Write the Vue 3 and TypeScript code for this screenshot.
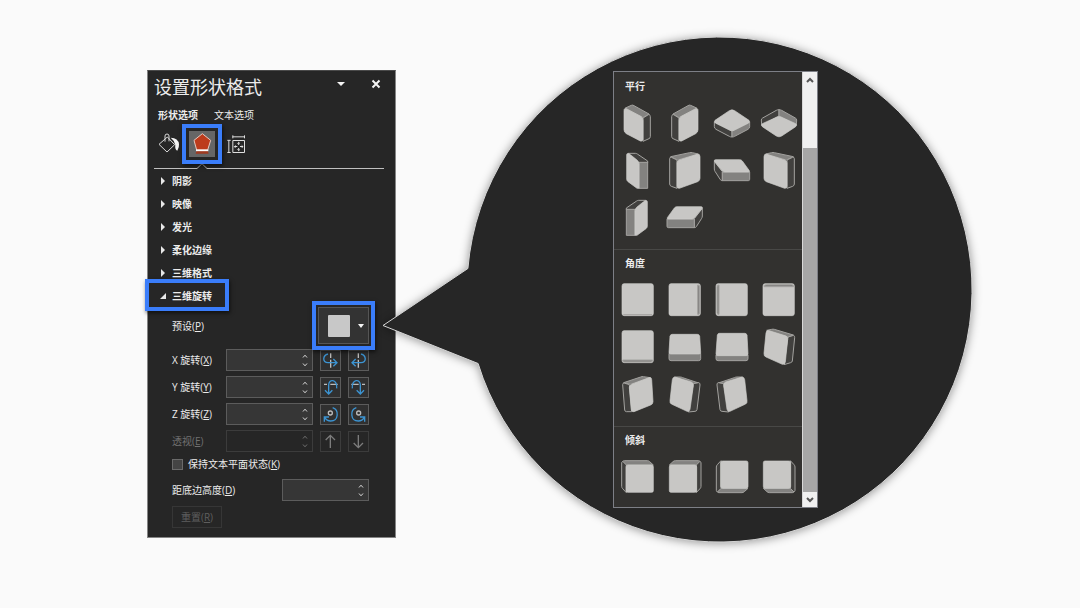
<script setup lang="ts">
import { ref } from 'vue'

type Tone = 'face' | 'mid' | 'dark'
interface Part { tone: Tone; d: string }
interface Preset { name: string; parts: Part[]; flip?: string }
interface Group { title: string; presets: Preset[] }

const part = (tone: Tone, d: string): Part => ({ tone, d })

const isoLeft: Part[] = [
  part('mid', 'M34 24L52 16Q56 14 60 17L105 42L87 53Z'),
  part('dark', 'M87 54L105 43Q109 45 109 50V110Q109 114 105 116L87 124Z'),
  part('face', 'M30 32Q30 23 38 27L80 49Q87 53 87 61V118Q86 125 79 123L37 101Q30 97 30 89Z'),
]
const isoTop: Part[] = [
  part('dark', 'M19 66L72 93V111Q67 111 64 109L24 88Q19 85 19 80Z'),
  part('mid', 'M125 66L72 93V111Q77 111 80 109L120 88Q125 85 125 80Z'),
  part('face', 'M21 61L64 32Q72 27 80 32L123 61Q127 66 122 69L78 91Q72 94 66 91L22 69Q17 66 21 61Z'),
]
const isoBottom: Part[] = [
  part('dark', 'M19 60Q19 56 23 54L64 31Q68 29 72 29V48L20 76Z'),
  part('mid', 'M125 60Q125 56 121 54L80 31Q76 29 72 29V48L124 76Z'),
  part('face', 'M22 71L66 51Q72 48 78 51L122 71Q127 75 122 80L80 108Q72 113 64 108L22 80Q17 75 22 71Z'),
]
const offAxisLeft: Part[] = [
  part('dark', 'M42 19H64Q67 19 70 21L101 42V48H75Z'),
  part('mid', 'M75 46H101V124H75Z'),
  part('face', 'M38 23Q38 19 43 20Q46 20 49 23L69 39Q75 44 75 51V124H69L42 104Q38 101 38 96Z'),
]
const offAxisFront: Part[] = [
  part('mid', 'M29 29L86 17Q90 16 94 17L112 21L50 39Z'),
  part('dark', 'M26 35Q26 30 31 31L48 39V124L31 118Q26 116 26 111Z'),
  part('face', 'M48 48Q48 41 55 39L109 22Q117 20 117 29V94Q117 101 110 104L55 124Q48 125 48 117Z'),
]
const offAxisTop: Part[] = [
  part('dark', 'M19 43L43 74V101Q39 101 37 98L21 73Q19 70 19 66Z'),
  part('mid', 'M43 75H125V97Q125 101 121 101H43Z'),
  part('face', 'M19 42Q18 38 23 38H95Q100 38 103 42L124 71Q126 75 121 75H50Q46 75 43 72L21 45Z'),
]
const tiltRight: Part[] = [
  part('dark', 'M99 39L116 34Q119 36 119 41L112 111Q111 115 107 116L87 122Z'),
  part('mid', 'M35 19L50 16Q54 15 58 16L115 33L99 39Z'),
  part('face', 'M33 27Q34 18 42 20L93 36Q99 38 98 46L91 114Q90 122 82 121L33 99Q26 96 27 88Z'),
]
const tiltLeft: Part[] = [
  part('mid', 'M29 35L80 18Q84 16 88 17L109 20L49 40Z'),
  part('dark', 'M26 41Q26 36 30 36L46 41L53 122H37Q33 122 32 117Z'),
  part('face', 'M46 50Q46 43 53 40L105 20Q113 18 113 26L117 92Q117 99 110 102L60 122Q53 124 52 116Z'),
]
const tiltBack: Part[] = [
  part('mid', 'M40 18H58Q61 18 65 20L113 36L97 40Z'),
  part('dark', 'M97 38L113 35Q118 36 117 42L108 116Q107 121 102 121L82 123Z'),
  part('face', 'M34 26Q35 17 44 19L91 33Q98 36 97 44L87 115Q85 123 78 121L31 99Q26 96 27 89Z'),
]
const oblique: Part[] = [
  part('mid', 'M26 22Q28 20 31 20H100Q104 20 107 23L118 33H37Z'),
  part('dark', 'M26 22L37 33V116L26 104Q23 101 23 97V27Q23 24 26 22Z'),
  part('face', 'M42 33H113Q118 33 118 39V110Q118 115 113 115H42Q36 115 36 110V39Q36 33 42 33Z'),
]
const square = part('face', 'M30 20H112Q118 20 118 27V109Q118 116 112 116H30Q24 116 24 109V27Q24 20 30 20Z')

const groups: Group[] = [
  {
    title: '平行',
    presets: [
      { name: '等角 左下', parts: isoLeft },
      { name: '等角 右上', parts: isoLeft, flip: 'translate(141 0) scale(-1 1)' },
      { name: '等角 顶部朝上', parts: isoTop },
      { name: '等角 底部朝下', parts: isoBottom },
      { name: '离轴 1 左', parts: offAxisLeft },
      { name: '离轴 1 右', parts: offAxisFront },
      { name: '离轴 1 上', parts: offAxisTop },
      { name: '离轴 2 左', parts: offAxisFront, flip: 'translate(144 0) scale(-1 1)' },
      { name: '离轴 2 右', parts: offAxisLeft, flip: 'translate(138 0) scale(-1 1)' },
      { name: '离轴 2 上', parts: offAxisTop, flip: 'translate(143 0) scale(-1 1)' },
    ],
  },
  {
    title: '角度',
    presets: [
      { name: '前透视', parts: [square, part('mid', 'M28 113H114')] },
      { name: '左透视', parts: [square, part('mid', 'M110 24Q116 23 116 30V107Q116 113 110 112Z')] },
      { name: '右透视', parts: [square, part('mid', 'M33 24Q27 23 27 30V107Q27 113 33 112Z')] },
      { name: '下透视', parts: [square, part('mid', 'M27 29Q27 23 34 23H110Q116 23 116 29Z')] },
      { name: '上透视', parts: [square, part('mid', 'M26 108H116Q116 114 110 114H32Q26 114 26 108Z')] },
      {
        name: '适度宽松透视',
        parts: [
          part('mid', 'M24 88H119V104Q119 110 113 110H30Q24 110 24 104Z'),
          part('face', 'M34 31H109Q115 31 116 37L119 85Q119 90 114 90H29Q24 90 24 85L27 37Q28 31 34 31Z'),
        ],
      },
      {
        name: '宽松透视',
        parts: [
          part('mid', 'M24 93H120V104Q120 110 114 110H30Q24 110 24 104Z'),
          part('face', 'M34 28H110Q116 28 117 34L120 89Q120 95 115 95H29Q24 95 24 89L28 34Q29 28 34 28Z'),
        ],
      },
      { name: '左向对比透视', parts: tiltRight },
      { name: '右向对比透视', parts: tiltLeft },
      { name: '极左极大透视', parts: tiltBack },
      { name: '极右极大透视', parts: tiltBack, flip: 'translate(144 0) scale(-1 1)' },
    ],
  },
  {
    title: '倾斜',
    presets: [
      { name: '倾斜 左上', parts: oblique },
      { name: '倾斜 右上', parts: oblique, flip: 'translate(143 0) scale(-1 1)' },
      { name: '倾斜 左下', parts: oblique, flip: 'translate(2 136) scale(1 -1)' },
      { name: '倾斜 右下', parts: oblique, flip: 'translate(143 136) scale(-1 -1)' },
    ],
  },
]

const sections = ['阴影', '映像', '发光', '柔化边缘', '三维格式', '三维旋转']
const openSection = '三维旋转'

const axes = [
  {
    id: 'x', text: 'X 旋转', key: 'X', names: ['向左', '向右'],
    guide: 'M32 10V24M32 29V53',
    arrow: 'M24 12C8 16 6 38 24 38H50M40 27L51 38L40 49',
  },
  {
    id: 'y', text: 'Y 旋转', key: 'Y', names: ['向上', '向下'],
    guide: 'M12 22H21M31 22H53',
    arrow: 'M50 34C52 6 26 4 26 24V50M15 40L26 51L37 40',
  },
  {
    id: 'z', text: 'Z 旋转', key: 'Z', names: ['顺时针', '逆时针'],
    guide: 'M31 21A6 6 0 1 1 31 33A6 6 0 1 1 31 21',
    arrow: 'M38 11C58 18 56 51 32 51C24 51 18 47 14 40M13 53V39H27',
  },
]

const values = ref<Record<string, string>>({ x: '', y: '', z: '' })
const distance = ref('')
const keepFlat = ref(false)
</script>

<template>
  <main class="page">
    <section class="panel" aria-label="设置形状格式">
      <header class="title-bar">
        <h1>设置形状格式</h1>
        <button class="plain" aria-label="任务窗格选项">
          <svg width="10" height="6" viewBox="0 0 10 6"><path d="M1 1H9L5 5Z" fill="#f4f4f4" /></svg>
        </button>
        <button class="plain close" aria-label="关闭">
          <svg width="10" height="10" viewBox="0 0 10 10"><path d="M1.5 1.5L8.5 8.5M8.5 1.5L1.5 8.5" stroke="#f4f4f4" stroke-width="2" /></svg>
        </button>
      </header>

      <nav class="tabs">
        <button class="plain current">形状选项</button>
        <button class="plain">文本选项</button>
      </nav>

      <div class="categories">
        <button class="plain fill-icon" aria-label="填充与线条">
          <svg width="22" height="22" viewBox="0 0 66 66" fill="none" stroke="#d8d8d8" stroke-width="3">
            <path d="M28 12L3 34L27 57L50 35Z" />
            <path d="M21 26V9Q21 3 27 3Q33 3 33 9V25" />
            <path d="M38 14Q61 14 63 34Q64 44 58 53Q50 50 52 36Q49 22 38 14Z" fill="#f4f4f4" stroke="none" />
          </svg>
        </button>
        <button class="plain effects" aria-label="效果">
          <svg width="26" height="26" viewBox="0 0 78 78">
            <path d="M40 8L65 28L56 57H23L15 28Z" fill="#bd3b1c" stroke="#e6c9c0" stroke-width="3" />
            <path d="M23 58H56L59 68H20Z" fill="#9f3a20" />
            <path d="M21 58H58" stroke="#fff" stroke-width="5" />
          </svg>
          <span class="marker"></span>
        </button>
        <button class="plain" aria-label="大小与属性">
          <svg width="18" height="18" viewBox="0 0 54 54" fill="none" stroke="#dedede" stroke-width="3">
            <path d="M5.500 16V52.500M1 16H11M1 52.500H11M17 5.500H52.500M17.500 1V10M52.500 1V10" />
            <path d="M17.500 16.500H52.500V52.500H17.500Z" />
            <path d="M35 22V30M35 39V47M22 34.500H31M39 34.500H48" />
            <path d="M31 26L35 22L39 26M31 43L35 47L39 43M26 31L22 35L26 39M44 31L48 35L44 39" stroke-width="2.500" />
          </svg>
        </button>
      </div>

      <div class="rule">
        <span></span>
        <svg width="12" height="6" viewBox="0 0 12 6"><path d="M0 5.500H1L6 .7L11 5.500H12" fill="none" stroke="#c0c0c0" /></svg>
        <span></span>
      </div>

      <div v-for="name in sections" :key="name" class="section">
        <button class="plain" :aria-expanded="name === openSection">
          <svg width="6" height="8" viewBox="0 0 6 8">
            <path :d="name === openSection ? 'M6 1V7H0Z' : 'M1 0L5 4L1 8Z'" fill="#e8e8e8" />
          </svg>
          {{ name }}
        </button>
        <span v-if="name === openSection" class="marker"></span>
      </div>

      <form class="fields" @submit.prevent>
        <div class="row preset-row">
          <label for="preset">预设(<u>P</u>)</label>
          <button id="preset" class="preset" type="button" aria-haspopup="listbox" aria-expanded="true">
            <span class="swatch"></span>
            <svg width="6" height="4" viewBox="0 0 6 4"><path d="M0 0H6L3 4Z" fill="#f4f4f4" /></svg>
            <span class="marker"></span>
          </button>
        </div>

        <div v-for="axis in axes" :key="axis.id" class="row">
          <label :for="axis.id">{{ axis.text }}(<u>{{ axis.key }}</u>)</label>
          <div class="spinner">
            <input :id="axis.id" v-model="values[axis.id]" type="text" />
            <div class="steps">
              <button class="plain" type="button" aria-label="增加"><svg width="6" height="4" viewBox="0 0 6 4"><path d="M1 3.5L3 1.2L5 3.5" /></svg></button>
              <button class="plain" type="button" aria-label="减少"><svg width="6" height="4" viewBox="0 0 6 4"><path d="M1 .5L3 2.8L5 .5" /></svg></button>
            </div>
          </div>
          <button v-for="(label, i) in axis.names" :key="label" class="tool" type="button" :aria-label="label">
            <svg viewBox="0 0 63 63" fill="none" stroke-width="4">
              <g :transform="i === 1 ? 'translate(63 0) scale(-1 1)' : undefined">
                <path :d="axis.guide" stroke="#bcbcbc" />
                <path :d="axis.arrow" stroke="#3c94d2" />
              </g>
            </svg>
          </button>
        </div>

        <div class="row off">
          <label for="perspective">透视(<u>E</u>)</label>
          <div class="spinner">
            <input id="perspective" type="text" disabled />
            <div class="steps">
              <button class="plain" type="button" disabled aria-label="增加"><svg width="6" height="4" viewBox="0 0 6 4"><path d="M1 3.5L3 1.2L5 3.5" /></svg></button>
              <button class="plain" type="button" disabled aria-label="减少"><svg width="6" height="4" viewBox="0 0 6 4"><path d="M1 .5L3 2.8L5 .5" /></svg></button>
            </div>
          </div>
          <button class="tool" type="button" disabled aria-label="缩小视野">
            <svg viewBox="0 0 63 63" fill="none" stroke="#7c7c7c" stroke-width="4"><path d="M31 51V13M17 27L31 13L45 27" /></svg>
          </button>
          <button class="tool" type="button" disabled aria-label="扩大视野">
            <svg viewBox="0 0 63 63" fill="none" stroke="#7c7c7c" stroke-width="4"><path d="M31 12V50M17 36L31 50L45 36" /></svg>
          </button>
        </div>

        <label class="check"><input v-model="keepFlat" type="checkbox" /><span>保持文本平面状态(<u>K</u>)</span></label>

        <div class="row distance">
          <label for="distance">距底边高度(<u>D</u>)</label>
          <div class="spinner">
            <input id="distance" v-model="distance" type="text" />
            <div class="steps">
              <button class="plain" type="button" aria-label="增加"><svg width="6" height="4" viewBox="0 0 6 4"><path d="M1 3.5L3 1.2L5 3.5" /></svg></button>
              <button class="plain" type="button" aria-label="减少"><svg width="6" height="4" viewBox="0 0 6 4"><path d="M1 .5L3 2.8L5 .5" /></svg></button>
            </div>
          </div>
        </div>

        <button class="reset" type="button" disabled>重置(<u>R</u>)</button>
      </form>
    </section>

    <section class="bubble" aria-label="三维旋转预设">
      <svg class="bubble-shape" viewBox="383 36 589 507" aria-hidden="true">
        <path d="M383 325.5L467.9 268.5A252.5 252.5 0 1 1 478.1 363.5Z" fill="#262626" stroke="#d4d4d4" />
      </svg>
      <div class="gallery">
        <div class="groups">
          <section v-for="group in groups" :key="group.title" class="group">
            <h2>{{ group.title }}</h2>
            <div class="grid">
              <button v-for="preset in group.presets" :key="preset.name" class="plain" :aria-label="preset.name">
                <svg viewBox="0 0 141 141">
                  <g :transform="preset.flip">
                    <path v-for="(p, i) in preset.parts" :key="i" :class="p.tone" :d="p.d" />
                  </g>
                </svg>
              </button>
            </div>
          </section>
        </div>
        <div class="scrollbar">
          <button class="plain" aria-label="向上滚动"><svg width="8" height="6" viewBox="0 0 8 6"><path d="M1 5L4 2L7 5" /></svg></button>
          <div class="track"><div class="thumb"></div></div>
          <button class="plain" aria-label="向下滚动"><svg width="8" height="6" viewBox="0 0 8 6"><path d="M1 1L4 4L7 1" /></svg></button>
        </div>
      </div>
    </section>
  </main>
</template>

<style>
body {
  margin: 0;
  background: #fafafa;
}
</style>

<style scoped>
.page {
  box-sizing: border-box;
  min-height: 100vh;
  display: grid;
  grid-template-columns: 147fr minmax(249px, 249fr) minmax(576px, 576fr) 108fr;
  align-items: center;
  font: 10px/14px "Open Sans", "Noto Sans CJK SC", sans-serif;
  color: #ececec;
}
.page * {
  box-sizing: border-box;
}
button,
input {
  font: inherit;
  color: inherit;
  margin: 0;
}
svg {
  display: block;
}
.plain {
  border: 0;
  padding: 0;
  background: none;
}
h1,
h2 {
  margin: 0;
}
u {
  text-underline-offset: 1px;
}

.panel {
  grid-column: 2;
  background: #262626;
  border: 1px solid #858585;
  border-top-color: #4a4a4a;
  padding-bottom: 9px;
}
.title-bar {
  display: flex;
  align-items: center;
  height: 32px;
  padding: 0 14px 0 6px;
}
h1 {
  flex: 1;
  font-size: 18px;
  line-height: 26px;
  font-weight: 400;
}
.title-bar .close {
  margin-left: 25px;
}
.title-bar .plain {
  margin-bottom: 6px;
}
.tabs {
  display: flex;
  gap: 16px;
  height: 24px;
  padding-left: 10px;
}
.tabs .current {
  font-weight: 700;
}
.categories {
  display: flex;
  align-items: center;
  height: 34px;
  padding-left: 10px;
}
.effects {
  position: relative;
  margin: 0 12px 0 9px;
  background: #666;
}
.marker {
  position: absolute;
  inset: -7px;
  border: 4px solid #3a7dfa;
  box-shadow: 1px 2px 4px #0009;
  pointer-events: none;
}
.rule {
  display: flex;
  align-items: flex-end;
  height: 8px;
  padding: 0 11px 0 6px;
}
.rule span {
  height: 1px;
  background: #c0c0c0;
  width: 42px;
}
.rule span:last-child {
  flex: 1;
}
.section {
  position: relative;
  height: 23px;
  padding-left: 12px;
}
.section button {
  display: flex;
  align-items: center;
  gap: 6px;
  height: 23px;
  font-weight: 700;
}
.section .marker {
  inset: -5px auto -4px -3px;
  width: 84px;
}
.fields {
  display: flex;
  flex-direction: column;
  gap: 5px;
  padding: 0 26px 0 24px;
}
.row {
  display: flex;
  align-items: center;
  gap: 7px;
  height: 22px;
}
.row label {
  flex: 1;
  white-space: nowrap;
}
.preset-row {
  height: 37px;
}
.preset {
  position: relative;
  display: flex;
  align-items: center;
  justify-content: center;
  gap: 8px;
  width: 51px;
  height: 37px;
  padding: 0 0 0 4px;
  background: #333;
  border: 1px solid #555;
}
.swatch {
  width: 22px;
  height: 22px;
  border-radius: 1px;
  background: #c8c8c8;
}
.spinner {
  display: flex;
  width: 87px;
  height: 22px;
  background: #363636;
  border: 1px solid #5c5c5c;
}
.spinner input {
  flex: 1;
  min-width: 0;
  padding: 0 4px;
  border: 0;
  background: none;
}
.steps {
  display: flex;
  flex-direction: column;
  justify-content: space-between;
  padding: 4px 4px 3px 0;
}
.steps path {
  fill: none;
  stroke: #d8d8d8;
}
.tool {
  width: 21px;
  height: 21px;
  padding: 0;
  background: #303030;
  border: 1px solid #5c5c5c;
}
.tool svg {
  margin: -1px;
}
.off {
  color: #707070;
}
.off .spinner,
.off .tool {
  background: #262626;
  border-color: #3c3c3c;
}
.off .steps path {
  stroke: #707070;
}
.check {
  display: flex;
  align-items: center;
  gap: 5px;
  height: 14px;
  white-space: nowrap;
}
.check input {
  appearance: none;
  width: 11px;
  height: 11px;
  background: #444;
  border: 1px solid #6a6a6a;
}
.check input:checked {
  background: #c8c8c8;
}
.distance {
  margin-top: 3px;
}
.reset {
  align-self: flex-start;
  width: 50px;
  height: 22px;
  padding: 0;
  background: none;
  border: 1px solid #363636;
  color: #5e5e5e;
}

.bubble {
  grid-column: 3;
  position: relative;
  display: grid;
  place-items: center;
  min-height: 507px;
  margin: 0 0 29px -13px;
  padding-left: 76px;
}
.bubble-shape {
  position: absolute;
  inset: 0;
  width: 100%;
  height: 100%;
  overflow: visible;
  filter: drop-shadow(0 1px 5px #0006);
}
.gallery {
  position: relative;
  display: flex;
  background: #32312f;
  border: 1px solid #7d7f86;
}
.groups {
  padding: 1px 0 6px;
}
.group + .group {
  border-top: 1px solid #484846;
}
.group:not(:last-child) {
  padding-bottom: 8px;
}
h2 {
  height: 27px;
  padding-left: 11px;
  font-size: 10px;
  line-height: 27px;
  font-weight: 700;
}
.grid {
  display: grid;
  grid-template-columns: repeat(4, 47px);
  grid-auto-rows: 47px;
}
.face,
.mid,
.dark {
  stroke-width: 3;
  stroke-linejoin: round;
  stroke: #a3a29f;
}
.face {
  fill: #c8c7c5;
  stroke: #cfcecc;
  stroke-width: 2;
}
.mid {
  fill: #838280;
}
.dark {
  fill: #41403e;
}
.scrollbar {
  display: flex;
  flex-direction: column;
  width: 15px;
  background: #f0f0f0;
  border-left: 1px solid #d8d8d8;
}
.scrollbar .plain {
  display: grid;
  place-items: center;
  height: 15px;
}
.scrollbar path {
  fill: none;
  stroke: #555;
  stroke-width: 2;
}
.track {
  flex: 1;
  display: flex;
  flex-direction: column;
  justify-content: flex-end;
}
.thumb {
  height: 85%;
  background: #a6a6a6;
}
</style>
